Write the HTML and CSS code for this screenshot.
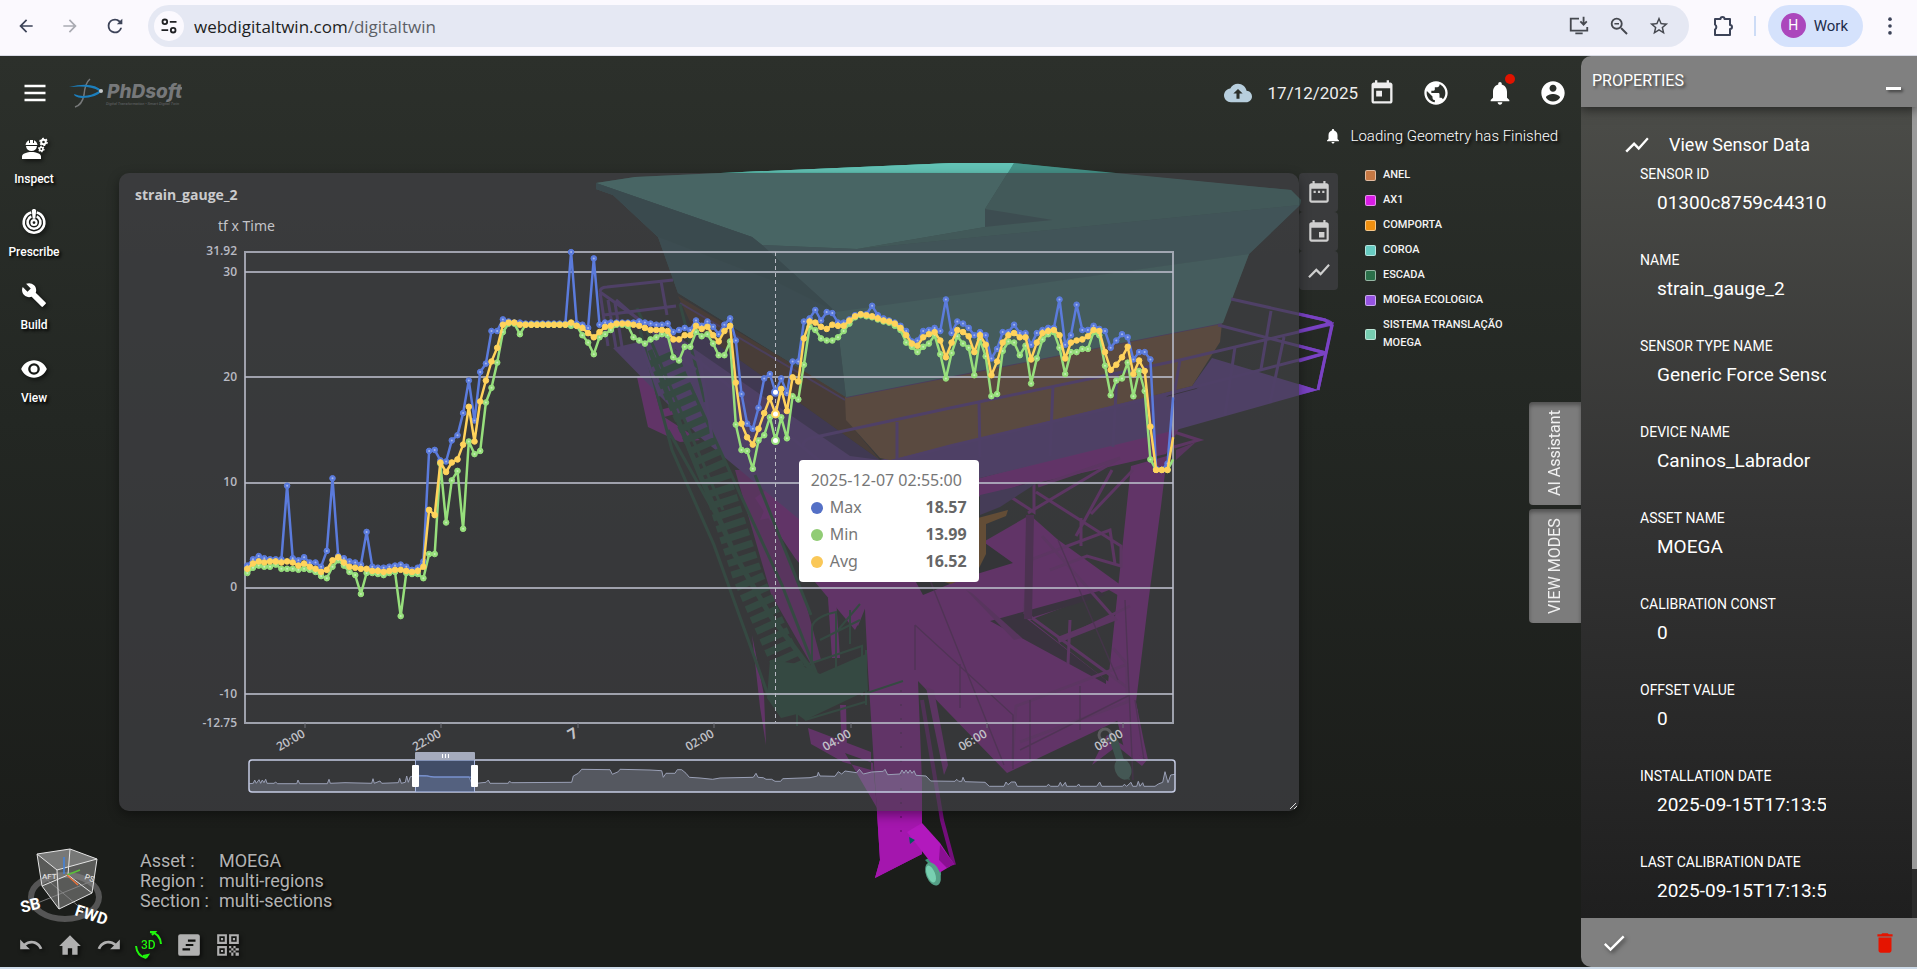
FILE: index.html
```html
<!DOCTYPE html>
<html lang="en">
<head>
<meta charset="utf-8">
<title>Web Digital Twin</title>
<link rel="stylesheet" href="styles.css">
</head>
<body>
<svg class="sprite" aria-hidden="true">
  <symbol id="i-back" viewBox="0 0 24 24"><path d="M20 11H7.83l5.59-5.59L12 4l-8 8 8 8 1.41-1.41L7.83 13H20z"/></symbol>
  <symbol id="i-fwd" viewBox="0 0 24 24"><path d="M12 4l-1.41 1.41L16.17 11H4v2h12.17l-5.58 5.59L12 20l8-8z"/></symbol>
  <symbol id="i-reload" viewBox="0 0 24 24"><path d="M17.65 6.35A7.96 7.96 0 0 0 12 4a8 8 0 1 0 7.73 10h-2.08A6 6 0 1 1 12 6c1.66 0 3.14.69 4.22 1.78L14 10h6V4z"/></symbol>
  <symbol id="i-site" viewBox="0 0 24 24"><g fill="none" stroke="currentColor" stroke-width="2.2"><circle cx="7" cy="7" r="2.8"/><path d="M13 7h8M3 17h8"/><circle cx="17" cy="17" r="2.8"/></g></symbol>
  <symbol id="i-install" viewBox="0 0 24 24"><path d="M12 4H3v13h18v-4M8 20h8M17 2v8M13.500 7l3.500 3.500L20.500 7" fill="none" stroke="currentColor" stroke-width="2"/></symbol>
  <symbol id="i-zoomout" viewBox="0 0 24 24"><path d="M15.500 14h-.79l-.28-.27A6.470 6.470 0 0 0 16 9.500 6.500 6.500 0 1 0 9.500 16c1.610 0 3.090-.59 4.230-1.570l.27.28v.79l6 6L21.500 20zM9.500 14C7.010 14 5 11.990 5 9.500S7.010 5 9.500 5 14 7.010 14 9.500 11.990 14 9.500 14zM7 8.700h5v1.600H7z"/></symbol>
  <symbol id="i-star" viewBox="0 0 24 24"><path d="M22 9.24l-7.19-.62L12 2 9.19 8.63 2 9.24l5.46 4.73L5.82 21 12 17.27 18.18 21l-1.63-7.03zM12 15.4l-3.76 2.27 1-4.28-3.32-2.88 4.38-.38L12 6.1l1.71 4.04 4.38.38-3.32 2.88 1 4.28z"/></symbol>
  <symbol id="i-ext" viewBox="0 0 24 24"><path d="M4 5h5.500a2 2 0 0 1 4 0H19v6a2 2 0 0 1 0 4v6H4v-5.500a3 3 0 0 0 0-5z" fill="none" stroke="currentColor" stroke-width="2" stroke-linejoin="round"/></symbol>
  <symbol id="i-kebab" viewBox="0 0 24 24"><circle cx="12" cy="4.500" r="2"/><circle cx="12" cy="12" r="2"/><circle cx="12" cy="19.500" r="2"/></symbol>
  <symbol id="i-menu" viewBox="0 0 24 24"><path d="M3 19h18v-2H3zM3 13h18v-2H3zM3 5v2h18V5z"/></symbol>
  <symbol id="i-engineer" viewBox="0 0 28 24"><path d="M2 21v-2.500C2 15.500 7 14 11.500 14s9.500 1.500 9.500 4.500V21zM6 8h11c-.3 3.200-2.500 5-5.500 5S6.300 11.200 6 8zM5.500 7c.3-2.400 1.800-4 3.500-4.800V5h1V2h3v3h1V2.200c1.700.8 3.200 2.400 3.500 4.800z"/><g fill="none" stroke="currentColor"><circle cx="23.500" cy="4" r="2.300" stroke-width="2"/><circle cx="23.500" cy="4" r="3.600" stroke-width="1.400" stroke-dasharray="1.900 1.870"/><circle cx="21.300" cy="11" r="1.700" stroke-width="1.600"/><circle cx="21.300" cy="11" r="2.700" stroke-width="1.200" stroke-dasharray="1.400 1.430"/></g></symbol>
  <symbol id="i-target" viewBox="0 0 24 24"><g fill="none" stroke="currentColor" stroke-width="2.400"><path d="M14.500 3.200a9.500 9.500 0 1 1-5 0M14.500 6.800a6 6 0 1 1-5 0"/><circle cx="12" cy="12.500" r="2.300" stroke-width="2"/></g><path d="M10 1.500c0-2 4-2 4 0L13.200 9h-2.400z"/></symbol>
  <symbol id="i-build" viewBox="0 0 24 24"><path d="M22.7 19l-9.1-9.1c.9-2.3.4-5-1.5-6.9-2-2-5-2.4-7.4-1.3L9 6 6 9 1.6 4.700C.4 7.100.9 10.100 2.900 12.100c1.900 1.900 4.600 2.400 6.900 1.500l9.100 9.100c.4.4 1 .4 1.400 0l2.300-2.300c.5-.4.5-1.100.1-1.400z"/></symbol>
  <symbol id="i-eye" viewBox="0 0 24 24"><path d="M12 4.500C7 4.500 2.730 7.610 1 12c1.730 4.390 6 7.500 11 7.500s9.270-3.110 11-7.500c-1.730-4.390-6-7.500-11-7.500zM12 17a5 5 0 1 1 0-10 5 5 0 0 1 0 10zm0-8a3 3 0 1 0 0 6 3 3 0 0 0 0-6z"/></symbol>
  <symbol id="i-cloud" viewBox="0 0 24 24"><path fill-rule="evenodd" d="M19.350 10.040C18.670 6.590 15.640 4 12 4 9.110 4 6.600 5.640 5.350 8.040 2.340 8.360 0 10.910 0 14c0 3.310 2.690 6 6 6h13c2.760 0 5-2.240 5-5 0-2.640-2.050-4.780-4.650-4.960zM13.300 12.500V17h-2.600v-4.500H8L12 8.500l4 4z"/></symbol>
  <symbol id="i-today" viewBox="0 0 24 24"><path d="M19 3h-1V1h-2v2H8V1H6v2H5c-1.110 0-1.990.9-1.990 2L3 19c0 1.100.89 2 2 2h14c1.100 0 2-.9 2-2V5c0-1.100-.9-2-2-2zm0 16H5V8h14zM7 10h5v5H7z"/></symbol>
  <symbol id="i-event" viewBox="0 0 24 24"><path d="M19 3h-1V1h-2v2H8V1H6v2H5c-1.110 0-1.990.9-1.990 2L3 19c0 1.100.89 2 2 2h14c1.100 0 2-.9 2-2V5c0-1.100-.9-2-2-2zm0 16H5V8h14zM12 12h5v5h-5z"/></symbol>
  <symbol id="i-range" viewBox="0 0 24 24"><path d="M19 3h-1V1h-2v2H8V1H6v2H5c-1.110 0-1.990.9-1.990 2L3 19c0 1.100.89 2 2 2h14c1.100 0 2-.9 2-2V5c0-1.100-.9-2-2-2zm0 16H5V8h14zM7 10h2v2H7zM11 10h2v2h-2zM15 10h2v2h-2z"/></symbol>
  <symbol id="i-globe" viewBox="0 0 24 24"><path d="M12 2C6.480 2 2 6.480 2 12s4.480 10 10 10 10-4.480 10-10S17.520 2 12 2zm-1 17.930c-3.950-.49-7-3.850-7-7.930 0-.62.08-1.210.21-1.790L9 15v1c0 1.100.9 2 2 2zm6.900-2.540c-.26-.81-1-1.390-1.900-1.390h-1v-3c0-.55-.45-1-1-1H8v-2h2c.55 0 1-.45 1-1V7h2c1.100 0 2-.9 2-2v-.41c2.930 1.190 5 4.060 5 7.410 0 2.080-.8 3.970-2.100 5.390z"/></symbol>
  <symbol id="i-bell" viewBox="0 0 24 24"><path d="M12 22c1.100 0 2-.9 2-2h-4c0 1.100.89 2 2 2zm6-6v-5c0-3.070-1.640-5.640-4.500-6.320V4c0-.83-.67-1.500-1.500-1.500s-1.500.67-1.500 1.500v.68C7.630 5.360 6 7.920 6 11v5l-2 2v1h16v-1z"/></symbol>
  <symbol id="i-user" viewBox="0 0 24 24"><path d="M12 2C6.480 2 2 6.480 2 12s4.480 10 10 10 10-4.480 10-10S17.520 2 12 2zm0 3c1.660 0 3 1.340 3 3s-1.340 3-3 3-3-1.340-3-3 1.340-3 3-3zm0 14.200c-2.500 0-4.710-1.280-6-3.220.03-1.990 4-3.080 6-3.080 1.990 0 5.970 1.090 6 3.080-1.290 1.940-3.500 3.220-6 3.220z"/></symbol>
  <symbol id="i-chart" viewBox="0 0 24 24"><path d="M3.500 18.490l6-6.010 4 4L22 6.920l-1.410-1.410-7.090 7.970-4-4L2 16.990z"/></symbol>
  <symbol id="i-check" viewBox="0 0 24 24"><path d="M9 16.170L4.830 12l-1.420 1.410L9 19 21 7l-1.410-1.410z"/></symbol>
  <symbol id="i-trash" viewBox="0 0 24 24"><path d="M6 19c0 1.100.9 2 2 2h8c1.100 0 2-.9 2-2V7H6zM19 4h-3.500l-1-1h-5l-1 1H5v2h14z"/></symbol>
  <symbol id="i-undo" viewBox="0 0 24 24"><path d="M12.500 8c-2.650 0-5.050.99-6.900 2.600L2 7v9h9l-3.620-3.620c1.390-1.160 3.160-1.880 5.120-1.880 3.540 0 6.550 2.310 7.600 5.500l2.370-.78C21.080 11.030 17.150 8 12.500 8z"/></symbol>
  <symbol id="i-redo" viewBox="0 0 24 24"><path d="M11.500 8c2.650 0 5.050.99 6.900 2.600L22 7v9h-9l3.620-3.620c-1.390-1.160-3.160-1.880-5.120-1.880-3.540 0-6.550 2.310-7.600 5.500l-2.370-.78C2.920 11.030 6.850 8 11.500 8z"/></symbol>
  <symbol id="i-home" viewBox="0 0 24 24"><path d="M10 21v-6h4v6h5v-8h3L12 3 2 13h3v8z"/></symbol>
  <symbol id="i-notes" viewBox="0 0 24 24"><path fill-rule="evenodd" d="M4 2h16a2 2 0 0 1 2 2v16a2 2 0 0 1-2 2H4a2 2 0 0 1-2-2V4a2 2 0 0 1 2-2zm7 5v2h7V7zm-2 4v2h7v-2zm-3 4v2h7v-2z"/></symbol>
  <symbol id="i-qr" viewBox="0 0 24 24"><g fill="none" stroke="currentColor" stroke-width="2"><path d="M3 3h7v7H3zM14 3h7v7h-7zM3 14h7v7H3z"/></g><path d="M13 13h2v2h-2zM15 15h2v2h-2zM17 13h2v2h-2zM19 15h3v2h-3zM13 17h2v2h-2zM17 17h2v2h-2zM15 19h2v3h-2zM19 19h3v3h-3zM5.500 5.500h2v2h-2zM16.500 5.500h2v2h-2zM5.500 16.500h2v2h-2z"/></symbol>
</svg>

<header class="browser">
  <nav class="browser-nav" aria-label="Browser">
    <button aria-label="Back"><svg class="ic ic-20"><use href="#i-back"/></svg></button>
    <button aria-label="Forward" class="dim"><svg class="ic ic-20"><use href="#i-fwd"/></svg></button>
    <button aria-label="Reload"><svg class="ic ic-22"><use href="#i-reload"/></svg></button>
  </nav>
  <div class="address">
    <button class="site" aria-label="Site information"><svg class="ic ic-20"><use href="#i-site"/></svg></button>
    <p class="url"><span>webdigitaltwin.com</span>/digitaltwin</p>
    <button aria-label="Install"><svg class="ic ic-22"><use href="#i-install"/></svg></button>
    <button aria-label="Zoom"><svg class="ic ic-22"><use href="#i-zoomout"/></svg></button>
    <button aria-label="Bookmark"><svg class="ic ic-22"><use href="#i-star"/></svg></button>
  </div>
  <button class="ext" aria-label="Extensions"><svg class="ic ic-24"><use href="#i-ext"/></svg></button>
  <span class="divider"></span>
  <button class="profile"><span class="avatar">H</span>Work</button>
  <button aria-label="Menu"><svg class="ic ic-22"><use href="#i-kebab"/></svg></button>
</header>

<main class="app">
  <svg class="scene" viewBox="0 56 1917 911" role="img" aria-label="3D model">
    <!-- left support and lower beams -->
    <g fill="#ab17b5">
      <path d="M637 377l13-3 10 36 66-18v8l-62 17 36 23-20 2-32-15z"/>
      <path d="M755 440l30 18 35 100-10 8-50-70zM735 470l20 0 50 130 16 60-10 4-40-70z" opacity=".8"/>
      <path d="M752 635l12 60 2 50-6-38zM808 728l63 24 0 18-28-8-32-18zM840 705h6l1 45-5 0zM845 753l32 55-4-45z"/>
      <path d="M828 598h8l4 60h-8z"/>
      <path d="M780 480l42 0 20 70 18 70-5 10-60-72-40-60z"/>
      <path d="M760 520L980 478l200-52-14 28-186 42-110 100-12 30-32-40-60-80z"/>
      <path d="M1131 466l36-10-6 50-13 98-12 98 8 40 4 18-24-12-16-65z"/>
      <path d="M860 560h90l35-19 45-26 27 24 90 65v8l-38-22-79 30 76 60 26 16 6 15-131 62-89-92 4 100v73l-47 24 5-18-12-190-3-60z"/>
      <path d="M1092 765l15-30 40 25-5 6-25-20z"/>
    </g>
    <path d="M985 543l28 20-46 14-44 18-12-22z" fill="#16181a"/>
    <path d="M990 621l109-30 6 4-78 24 79 61v4z" fill="#2a1330"/>
    <path d="M926 687l8 3 14 75-4 10z" fill="#9a1aa4"/>
    <path d="M966 590l6 3 50 45-8 2z" fill="#8d1a96"/>
    <path d="M877 811h45v43l-47 24 5-18z" fill="#a416ae"/>
    <g fill="none" stroke="#9a1ba4" stroke-width="3">
      <path d="M1028 513l92-55-82 28M1036 492l85 54v20l-34-10-37 14M1000 490l34 22v-30M1112 470l-36 66M1081 518v28M1024 612l104 76M1030 556l-6 55M1060 640l70-34M1174 432l25 8-25 7M1133 470l-42 44M1042 536l75 85M1030 560l80-30 5 34"/>
      <path d="M1070 620l-2 44M1113 648l14 16v38l-107 40M1128 664l-112 42-4 60"/>
      <path d="M1058 640l56-22" stroke-width="6"/>
    </g>
    <path d="M1176 450l20-8-20 18z" fill="#8d1a96"/>
    <g fill="none" stroke="#5c1164" stroke-width="1.500" opacity=".7">
      <path d="M930 580l74 185M915 625l98 90v54M915 625v45M960 664v44M1020 750l110-55M1058 540l60 140M1080 686v44M1030 700v60"/>
      <path d="M1125 600l8 180M1135 700l9 60"/>
      <path d="M901 690v150" stroke-dasharray="2 12"/>
    </g>
    <path d="M922 700l20 120 12 45" stroke="#740e7c" stroke-width="4" fill="none"/>
    <path d="M980 500l48-18-28 23-20 8zM1026 515h8l-2 104h-8z" fill="#64106c"/>
    <path d="M925 860l12-6 4 8 0 14z" fill="#3f9478"/>
    <path d="M907 832l15-9 18 20 14 21-15 9z" fill="#b219bd"/>
    <path d="M940 845l14 19-7 4-8-8z" fill="#8a0f92"/>
    <path d="M909 837l6 3-5 4z" fill="#055a5c"/>
    <ellipse cx="933" cy="874" rx="7" ry="12" transform="rotate(-22 933 874)" fill="#559f86"/>
    <ellipse cx="931" cy="874" rx="4" ry="9" transform="rotate(-22 931 874)" fill="#78d0b1"/>
    <path d="M1108 735l10 5 12 40-8-2z" fill="#357a62"/>
    <ellipse cx="1123" cy="769" rx="8" ry="11" transform="rotate(-22 1123 769)" fill="#4c8b75"/>
    <circle cx="1105" cy="735" r="6" fill="none" stroke="#9a9a9a" stroke-width="3"/>
    <!-- gate -->
    <path d="M978 518l30-8-2 6-20 8v30l-8 16zM935 579l16 5 14-6z" fill="#b26a12"/>
    <!-- platform -->
    <path d="M613 348l60-14 207 126 312-74 20-28 106 32-142 40-196 48-120 42-60 0-100-83z" fill="#6d3fad"/>
    <path d="M692 326l188 134-30-4-160-110z" fill="#3f276e"/>
    <path d="M1172 392l30-7-6 4-30 8z" fill="#25182e"/>
    <path d="M980 495l60-14-40 26-20 8z" fill="#4e2f80"/>
    <!-- skirt -->
    <path d="M678 296l168 100 2 26 32 38-188-134z" fill="#583519"/>
    <path d="M845 397l377-74-2 19-28 44-302 74-10-2-34-38z" fill="#955f32"/>
    <path d="M680 303l165 97M846 397l376-74" stroke="#5f3a92" stroke-width="2" fill="none"/>
    <!-- hopper -->
    <path d="M596 183l39-6 107-5 210-9h62l94 10 183 17 10 10-1 5-51 49-26 67-377 76-168-104-20-56-45-42-17-6z" fill="#317068"/>
    <path d="M596 183l39-6 107-5 210-9h62l-29 46v18l-128 22-95-4-10-8z" fill="#59baaa"/>
    <path d="M742 172l210-9h62l-5 10z" fill="#63c3b6"/>
    <path d="M1014 163l277 27 10 10-1 5-443 44 128-22v-18z" fill="#459187"/>
    <path d="M985 209l68 11-68 7z" fill="#356a6b"/>
    <path d="M762 245l95 4 443-44-51 49-413 59z" fill="#428183"/>
    <path d="M836 312l413-58-26 69-377 74z" fill="#4f9c93"/>
    <path d="M596 183l156 54 10 8 74 67 10 85-168-104-20-56-45-42-17-6z" fill="#31676b"/>
    <path d="M596 183l156 54 10 8 74 67-60-30-118-45-45-42-17-6z" fill="#2b5f63"/>
    <!-- stairs -->
    <g fill="none" stroke="#1a5d39">
      <path d="M662 355l52 118 34 104 42 94" stroke-width="30" stroke-dasharray="7 5"/>
      <path d="M680 304l25 98M637 308l86 202M640 330l32 120 42 95 54 150M668 430l54 96M690 385l92 200 35 90M755 475l56 140" stroke-width="3"/>
      <path d="M650 350l50 125 35 80 35 60 45 60" stroke-width="5"/>
      <path d="M812 680v-52q0-8 16-14l8-2v60M820 640l40-20M838 630l22-26M850 610v34M797 668l65-22v50M797 668v58M805 720l60-18M867 693l36-12M866 650v55" stroke-width="2"/>
    </g>
    <path d="M770 660l28 4 22 10 46-20 2 36-63 30-8-6-16 4-14-20z" fill="#1a5d39"/>
    <!-- railings -->
    <g fill="none" stroke="#6f3fb4" stroke-width="3">
      <path d="M600 292q0-5 7-5l66-7M604 315l72-9M661 281l6 34M600 292l8 54M608 300l8 48M615 303l8 50M600 292l100 70 145 120M616 300l80 70M640 340l20 56M700 358l12 80"/>
      <path d="M803 446q0-6 8-8l139-30 230-48 152-36-14 66M890 462l60-16 210-50 166-43M1231 299l94 21q8 2 7 6M1218 325l108 28M897 422v38M979 403l1 54M1053 386l-3 70M1117 373l-4 74M1180 360l-6 34M1235 347l-10 68M1271 311l-10 58M1284 337l-14 66"/>
    </g>
    <path d="M1299 384l19 6-19 5z" fill="#7a42c4"/>
    <path d="M1299 314l26 6 7 6-14 64M1299 331l33-8M1299 361l27-8M1299 346l27 7" stroke="#7a42c4" stroke-width="3" fill="none"/>
  </svg>

  <section class="workspace">
    <header class="topbar">
      <button aria-label="Main menu"><svg class="ic ic-28"><use href="#i-menu"/></svg></button>
      <svg class="logo" viewBox="70 76 114 32" role="img" aria-label="PhDsoft">
        <path d="M92 78q-5 4-6 16-2 10-9 12" fill="none" stroke="#77797a" stroke-width="1.500"/>
        <path d="M71 86q24-6 33 4-6 7-20 7-8-1-8-4 12 5 25-3-8-6-30-4z" fill="#1c7fbd"/>
        <circle cx="103" cy="90" r="2" fill="#c7c9ca"/>
        <text x="109" y="97" class="logo-name">PhDsoft</text>
        <text x="108" y="104" class="logo-tag">Digital Transformation - Smart Digital Twin</text>
      </svg>
      <div class="top-actions">
        <button aria-label="Upload" class="cloud"><svg class="ic ic-28"><use href="#i-cloud"/></svg></button>
        <button class="date">17/12/2025<svg class="ic ic-28"><use href="#i-today"/></svg></button>
        <button aria-label="Language" class="globe"><svg class="ic ic-28"><use href="#i-globe"/></svg></button>
        <button aria-label="Notifications" class="alerts"><svg class="ic ic-28"><use href="#i-bell"/></svg><span class="dot"></span></button>
        <button aria-label="Account"><svg class="ic ic-28"><use href="#i-user"/></svg></button>
      </div>
    </header>

    <div class="content">
      <nav class="side" aria-label="Modes">
        <button><svg class="ic ic-28"><use href="#i-engineer"/></svg>Inspect</button>
        <button><svg class="ic ic-26"><use href="#i-target"/></svg>Prescribe</button>
        <button><svg class="ic ic-26"><use href="#i-build"/></svg>Build</button>
        <button><svg class="ic ic-28"><use href="#i-eye"/></svg>View</button>
      </nav>

      <article class="panel">
        <h2>strain_gauge_2</h2>
        <svg class="chart" viewBox="119 205 1180 606" role="img" aria-label="tf x Time">
          <defs><clipPath id="plot"><rect x="243" y="248" width="932" height="480"/></clipPath></defs>
          <text x="218" y="231" class="axis-name">tf x Time</text>
          <g class="ylab">
            <text x="237" y="255">31.92</text><text x="237" y="276">30</text><text x="237" y="381">20</text>
            <text x="237" y="486">10</text><text x="237" y="591">0</text><text x="237" y="698">-10</text><text x="237" y="727">-12.75</text>
          </g>
          <path class="grid" d="M245 272h928M245 377h928M245 483h928M245 588h928M245 694h928"/>
          <rect class="frame" x="245" y="252" width="928" height="471"/>
          <g id="ticks"></g>
          <path class="pointer" d="M775.500 252v470"/>
          <g id="series" clip-path="url(#plot)"></g>
          <g id="overview"></g>
          <g>
            <rect class="ov-frame" x="249" y="760" width="926" height="32" rx="3"/>
            <rect class="ov-sel" x="415" y="760" width="59" height="32"/>
            <path class="ov-line" d="M416 776l12 0 6 1 36 0 4 1"/>
            <rect class="ov-grip" x="415" y="752" width="60" height="8" rx="1"/>
            <path class="ov-dots" d="M442.500 754v4M445.500 754v4M448.500 754v4"/>
            <path class="ov-edge" d="M415.500 760v32M474.500 760v32"/>
            <rect class="ov-handle" x="412" y="765" width="7" height="22" rx="1"/>
            <rect class="ov-handle" x="471" y="765" width="7" height="22" rx="1"/>
          </g>
          <path class="resize" d="M1290 809l6-6M1294 809l3-3"/>
        </svg>
        <div class="tooltip">
          <p>2025-12-07 02:55:00</p>
          <dl>
            <dt><i class="c-max"></i>Max</dt><dd>18.57</dd>
            <dt><i class="c-min"></i>Min</dt><dd>13.99</dd>
            <dt><i class="c-avg"></i>Avg</dt><dd>16.52</dd>
          </dl>
        </div>
      </article>

      <div class="tools">
        <button aria-label="Date range"><svg class="ic ic-26"><use href="#i-range"/></svg></button>
        <button aria-label="Single date"><svg class="ic ic-26"><use href="#i-event"/></svg></button>
        <button aria-label="Series"><svg class="ic ic-26"><use href="#i-chart"/></svg></button>
      </div>

      <aside class="rail">
        <p class="notice"><svg class="ic ic-18"><use href="#i-bell"/></svg>Loading Geometry has Finished</p>
        <ul class="legend">
          <li><i class="k1"></i>ANEL</li>
          <li><i class="k2"></i>AX1</li>
          <li><i class="k3"></i>COMPORTA</li>
          <li><i class="k4"></i>COROA</li>
          <li><i class="k5"></i>ESCADA</li>
          <li><i class="k6"></i>MOEGA ECOLOGICA</li>
          <li><i class="k7"></i>SISTEMA TRANSLAÇÃO MOEGA</li>
        </ul>
        <div class="tabs">
          <button>AI Assistant</button>
          <button>VIEW MODES</button>
        </div>
      </aside>
    </div>

    <div class="status">
      <svg class="cube" viewBox="16 845 96 82" role="img" aria-label="Orientation cube">
        <ellipse cx="65" cy="897" rx="34" ry="22" fill="none" stroke="#555" stroke-width="6"/>
        <path d="M35 904l57-23M45 878l38 32" stroke="#777" stroke-width="1"/>
        <path d="M37 854l33-5 27 10-5 34-33 16-17-23z" fill="#8c8c8c" fill-opacity=".55"/>
        <path d="M37 854l33-5 27 10-40 11z" fill="#8c8c8c" fill-opacity=".6"/>
        <path d="M37 854l33-5 27 10-40 11zM37 854l5 32 17 23 33-16 5-34M57 870l2 39M70 849l-2 26-26 11M68 875l24 18" fill="none" stroke="#e4e4e4" stroke-width="1"/>
        <path d="M64 857v17" stroke="#3f83e0" stroke-width="1.500"/><path d="M67 875l13-5" stroke="#5bc13a" stroke-width="1.500"/><path d="M67 875l11 10" stroke="#e8703a" stroke-width="1.500"/>
        <text class="c-small" x="42" y="879">AFT</text><text class="c-small" x="84" y="879" transform="rotate(20 84 879)">PS</text>
        <text class="c-big" x="22" y="913" transform="rotate(-14 22 913)">SB</text><text class="c-big" x="74" y="915" transform="rotate(18 74 915)">FWD</text>
      </svg>
      <dl class="info">
        <dt>Asset :</dt><dd>MOEGA</dd>
        <dt>Region :</dt><dd>multi-regions</dd>
        <dt>Section :</dt><dd>multi-sections</dd>
      </dl>
    </div>
    <div class="toolbar">
      <button aria-label="Undo"><svg class="ic ic-26"><use href="#i-undo"/></svg></button>
      <button aria-label="Home"><svg class="ic ic-26"><use href="#i-home"/></svg></button>
      <button aria-label="Redo"><svg class="ic ic-26"><use href="#i-redo"/></svg></button>
      <button aria-label="3D view" class="three"><svg class="ic ic-28" viewBox="0 0 28 28"><path d="M15 1q10 1 11 12M15 1l5 0-3 3M1 15q1 10 10 12M11 27l2-3-5 1" fill="none" stroke="currentColor" stroke-width="2"/><text x="6" y="18">3D</text></svg></button>
      <button aria-label="Notes"><svg class="ic ic-26"><use href="#i-notes"/></svg></button>
      <button aria-label="QR code"><svg class="ic ic-26"><use href="#i-qr"/></svg></button>
    </div>
  </section>

  <aside class="props">
    <header><h1>PROPERTIES</h1><button aria-label="Minimize" class="min"></button></header>
    <div class="props-body">
      <form>
        <button type="button" class="view-data"><svg class="ic ic-28"><use href="#i-chart"/></svg>View Sensor Data</button>
        <div class="field"><label for="f1">SENSOR ID</label><input id="f1" value="01300c8759c44310"></div>
        <div class="field"><label for="f2">NAME</label><input id="f2" value="strain_gauge_2"></div>
        <div class="field"><label for="f3">SENSOR TYPE NAME</label><input id="f3" value="Generic Force Sensor"></div>
        <div class="field"><label for="f4">DEVICE NAME</label><input id="f4" value="Caninos_Labrador"></div>
        <div class="field"><label for="f5">ASSET NAME</label><input id="f5" value="MOEGA"></div>
        <div class="field"><label for="f6">CALIBRATION CONST</label><input id="f6" value="0"></div>
        <div class="field"><label for="f7">OFFSET VALUE</label><input id="f7" value="0"></div>
        <div class="field"><label for="f8">INSTALLATION DATE</label><input id="f8" value="2025-09-15T17:13:5"></div>
        <div class="field"><label for="f9">LAST CALIBRATION DATE</label><input id="f9" value="2025-09-15T17:13:5"></div>
      </form>
      <span class="track"><span class="thumb"></span></span>
    </div>
    <footer>
      <button aria-label="Confirm"><svg class="ic ic-28"><use href="#i-check"/></svg></button>
      <button aria-label="Delete" class="delete"><svg class="ic ic-26"><use href="#i-trash"/></svg></button>
    </footer>
  </aside>
</main>
<div class="strip"></div>
<script src="chart.js"></script>
</body>
</html>
```
FILE: styles.css
```css
* { box-sizing: border-box; }
html, body { height: 100%; }
body {
  margin: 0;
  display: flex;
  flex-direction: column;
  overflow: hidden;
  font-family: Roboto, "Liberation Sans", sans-serif;
  color: #fff;
  background: #1b1d1a;
}
button {
  padding: 0;
  border: 0;
  background: none;
  color: inherit;
  font: inherit;
  display: flex;
  align-items: center;
  flex: none;
}
h1, h2, p, dl, dd, ul { margin: 0; padding: 0; }
.sprite { position: absolute; width: 0; height: 0; }
.ic { display: block; fill: currentColor; flex: none; }
.ic-18 { width: 18px; height: 18px; }
.ic-20 { width: 20px; height: 20px; }
.ic-22 { width: 22px; height: 22px; }
.ic-24 { width: 24px; height: 24px; }
.ic-26 { width: 26px; height: 26px; }
.ic-28 { width: 28px; height: 28px; }

/* browser chrome */
.browser {
  flex: none;
  height: 56px;
  display: flex;
  align-items: center;
  padding: 0 16px 4px 16px;
  background: #fbf9fe;
  border-bottom: 1px solid #dadce6;
  color: #3c4358;
}
.browser-nav { display: flex; gap: 24px; width: 132px; }
.dim { color: #a9abb2; }
.address {
  flex: 1;
  height: 42px;
  display: flex;
  align-items: center;
  gap: 18px;
  padding: 0 19px 0 6px;
  border-radius: 21px;
  background: #e5e8f3;
  color: #45484f;
}
.site { width: 30px; height: 30px; border-radius: 50%; background: #fbf9fe; justify-content: center; margin-right: -8px; color: #202124; }
.url { flex: 1; padding-top: 2px; font: 17px/24px "Open Sans", "Noto Sans", sans-serif; color: #5c5f66; }
.url span { color: #1d1e22; }
.ext { margin-left: 22px; }
.divider { width: 2px; height: 20px; margin: 0 12px 0 19px; background: #cddcf6; }
.profile { height: 42px; padding: 0 15px 0 13px; margin-right: 16px; gap: 8px; border-radius: 21px; background: #d5e2fc; font-size: 15px; line-height: 20px; color: #1c2b4a; }
.avatar { width: 25px; height: 25px; border-radius: 50%; background: #ab47bc; color: #fff; font-size: 14px; line-height: 25px; text-align: center; }

/* application */
.app {
  position: relative;
  flex: 1;
  min-height: 0;
  display: flex;
  background: linear-gradient(#2c302b, #232723 40%, #1b1d1a 85%);
}
.scene { position: absolute; left: 0; top: 0; width: 100%; height: 100%; }
.workspace { position: relative; flex: 1; min-width: 0; display: flex; flex-direction: column; }
.topbar { height: 60px; padding: 13px 14px 0 21px; display: flex; align-items: center; }
.logo { width: 114px; height: 32px; margin-left: 19px; }
.logo-name { font: italic 800 19px Inter, sans-serif; fill: #76787a; }
.logo-tag { font: italic 4px Roboto, sans-serif; fill: #66686a; }
.top-actions { margin-left: auto; display: flex; align-items: center; }
.cloud { color: #b7cedd; margin-right: 16px; }
.date { gap: 10px; font-size: 17px; line-height: 20px; color: #eee; margin-right: 26px; }
.globe { margin-right: 36px; }
.alerts { position: relative; margin-right: 25px; }
.dot { position: absolute; top: -5px; right: -1px; width: 10px; height: 10px; border-radius: 50%; background: #e01300; }

.content { display: grid; grid-template-columns: 119px 1fr 39px 243px; grid-template-rows: 57px auto; }
.side { grid-row: 1 / 3; width: 68px; padding-top: 20px; display: flex; flex-direction: column; gap: 22px; }
.side button { flex-direction: column; height: 51px; justify-content: space-between; font-size: 12px; line-height: 16px; font-weight: 500; text-shadow: 2px 2px 3px #000; }
.side .ic, .toolbar .ic { filter: drop-shadow(2px 2px 2px rgba(0, 0, 0, .6)); }

.panel {
  position: relative;
  grid-column: 2;
  grid-row: 2;
  padding-top: 12px;
  border-radius: 10px;
  background: rgba(66, 66, 70, .7);
  box-shadow: 0 4px 12px rgba(0, 0, 0, .4);
  font-family: "Noto Sans", "Open Sans", sans-serif;
}
.panel h2 { margin-left: 16px; font: 700 14px/20px "Open Sans", sans-serif; color: #cbcbcd; }
.chart { display: block; width: 100%; }
.axis-name { font-size: 14px; fill: #c3c3c8; }
.ylab text { font: 600 12px "Open Sans", sans-serif; fill: #b9bbc4; text-anchor: end; }
.grid, .frame { fill: none; stroke: #b9bcc9; stroke-opacity: .8; stroke-width: 2; }
.tick { stroke: #6e7079; stroke-width: 1; }
.xlab { font: 600 12px "Open Sans", sans-serif; fill: #c1c2c8; text-anchor: end; }
.xlab.day { font-size: 15px; font-weight: 700; }
.pointer { stroke: #b9bbc4; stroke-width: 1; stroke-dasharray: 4 3; }
.line { fill: none; stroke-width: 2.5; stroke-linejoin: round; }
.area { fill: rgba(160, 165, 190, .3); }
.area-edge { fill: none; stroke: #9aa0b6; stroke-width: 1; }
.ov-frame { fill: none; stroke: #c5cbe3; stroke-width: 1.5; }
.ov-sel { fill: rgba(84, 112, 180, .38); }
.ov-line { fill: none; stroke: #7593dc; }
.ov-grip { fill: #a5abbd; }
.ov-dots { stroke: #fff; stroke-width: 1; }
.ov-edge { stroke: #aab8df; stroke-width: 1; }
.ov-handle { fill: #fff; }
.resize { stroke: #ddd; stroke-width: 1; }

.tooltip {
  position: absolute;
  left: 57.6%;
  top: 45%;
  width: 180px;
  padding: 7px 12px;
  border-radius: 4px;
  background: #fff;
  color: #777;
  font-size: 16px;
  line-height: 27px;
  white-space: nowrap;
}
.tooltip dl { display: grid; grid-template-columns: 1fr auto; }
.tooltip dt { display: flex; align-items: center; gap: 7px; }
.tooltip dt i { width: 12px; height: 12px; border-radius: 50%; }
.tooltip dd { font-weight: 700; color: #666; }
.c-max { background: #5470c6; }
.c-min { background: #91cc75; }
.c-avg { background: #fac858; }

.tools { grid-column: 3; grid-row: 2; display: flex; flex-direction: column; align-items: stretch; }
.tools button { height: 39px; justify-content: center; border-radius: 4px; background: rgba(66, 66, 70, .7); color: #cfcfcf; }

.rail { grid-column: 4; grid-row: 1 / 3; padding-top: 10px; display: flex; flex-direction: column; }
.notice { display: flex; align-items: center; justify-content: flex-end; gap: 9px; padding-right: 23px; font-size: 15px; line-height: 20px; font-weight: 300; white-space: nowrap; text-shadow: 2px 2px 3px #000; color: #fff; }
.legend { list-style: none; width: 160px; margin: 20px 0 0 27px; display: flex; flex-direction: column; gap: 7px; font-size: 11px; line-height: 18px; font-weight: 500; color: #f4f4f4; }
.legend li { display: flex; align-items: center; gap: 7px; }
.legend i { flex: none; width: 11px; height: 11px; border: 1px solid rgba(255, 255, 255, .5); border-radius: 2px; }
.k1 { background: #c67843; }
.k2 { background: #d91de6; }
.k3 { background: #ef9010; }
.k4 { background: #67cbc1; }
.k5 { background: #2b704a; }
.k6 { background: #9653e2; }
.k7 { background: #76cdb0; }
.tabs { margin-top: 50px; align-self: flex-end; display: flex; flex-direction: column; gap: 4px; }
.tabs button { width: 52px; height: 103px; justify-content: center; writing-mode: vertical-rl; transform: rotate(180deg); border-radius: 0 4px 4px 0; background: #7c7c7c; box-shadow: inset 0 -3px 4px rgba(0, 0, 0, .35); font-size: 16px; line-height: 20px; color: #f1f1f1; }
.tabs button + button { height: 114px; }

.status { display: flex; padding: 34px 0 0 16px; gap: 28px; }
.cube { width: 96px; height: 82px; overflow: visible; }
.c-small { font: 500 8px Roboto, sans-serif; fill: #ddd; }
.c-big { font: 700 16px Roboto, sans-serif; fill: #fff; }
.info { display: grid; grid-template-columns: 79px auto; grid-auto-rows: 20px; padding-top: 6px; font-size: 18px; line-height: 20px; color: #b2b2b2; text-shadow: 2px 2px 3px #000; }
.toolbar { display: flex; gap: 13px; padding: 4px 0 0 18px; height: 32px; align-items: center; color: #b0b0b0; }
.three { width: 28px; justify-content: center; color: #20f50d; }
.three text { font: 500 12px Roboto, sans-serif; }

/* properties */
.props { position: relative; width: 336px; flex: none; display: flex; flex-direction: column; border-radius: 10px 0 0 10px; overflow: hidden; }
.props header { position: relative; height: 51px; flex: none; display: flex; justify-content: space-between; padding: 15px 16px 0 11px; background: #808080; box-shadow: 0 3px 10px rgba(0, 0, 0, .5); }
.props h1 { font-size: 16px; line-height: 20px; font-weight: 400; text-shadow: 2px 2px 3px rgba(0, 0, 0, .5); }
.min { width: 15px; height: 3px; margin-top: 16px; background: #fff; box-shadow: 2px 2px 3px rgba(0, 0, 0, .5); }
.props-body { flex: 1; min-height: 0; display: flex; justify-content: space-between; background: linear-gradient(#4b4c48, #333 50%, #1f1f1f); }
.props form { padding: 24px 0 0 59px; overflow: hidden; }
.view-data { gap: 18px; height: 28px; margin-left: -17px; font-size: 18px; line-height: 28px; }
.field { display: flex; flex-direction: column; height: 86px; padding-top: 5px; }
.field label { font-size: 14px; line-height: 20px; height: 27px; }
.field input { width: 169px; height: 24px; margin-left: 17px; padding: 0; border: 0; background: none; outline: 0; color: #fff; font: 19px/24px Roboto, sans-serif; }
.track { width: 5px; background: #2b2b2b; }
.thumb { display: block; height: 94%; background: #9a9a9a; }
.props footer { height: 49px; flex: none; display: flex; align-items: center; justify-content: space-between; padding: 0 19px 0 19px; background: #808080; }
.props footer button:first-child .ic { filter: drop-shadow(2px 2px 2px rgba(0, 0, 0, .5)); }
.delete { color: #e51400; }
.strip { flex: none; height: 2px; background: #cddbe9; }
```
FILE: chart.js
```js
const max = [2.1,2.7,3,2.8,2.7,2.7,2.7,9.7,2.8,2.6,2.9,2.4,2.4,2,3.5,10.4,3,2.8,2.5,2.4,2.2,5.3,2,1.9,1.9,2,2.1,2.2,2,1.7,1.9,2.5,13,13.1,12.1,12,14,14.5,16.6,19.7,15.9,20.5,21.3,24.4,24.4,25.5,25.3,25.2,25.2,25.1,25.1,25.1,25.1,25.1,25.1,25.1,25.1,31.9,25.1,25,24.7,31.3,25,25.2,25.2,25.2,25.2,25.2,25.2,25.3,25.2,25.1,25,25,25.1,24.3,24.5,24.7,24.5,25.4,24.9,25.3,24.8,24.1,25,25.6,23.5,18.4,15.6,15.1,17.1,19.9,20.3,18.57,19.9,18.5,21.5,21.5,25.3,25.6,26.4,25.4,26.2,26.1,25.2,25.2,25.5,25.9,26,26,26.8,25.9,25.6,25.4,25.2,24.9,24.4,23.4,23.5,24.4,24.5,24.7,24.4,27.4,24.2,25.3,25.1,24.7,24,24.3,24,21.8,22.7,24.3,24.3,25,24.2,24.2,23.1,24.2,24.5,24.7,24.7,27.4,23.1,24,26.9,24.5,24.5,24.9,24.6,24.4,22.8,23.5,24.1,23.8,21.7,22.4,22.4,21.7,11.3,11.2,11.8,18.1];
const avg = [1.8,2.3,2.5,2.4,2.5,2.5,2.4,2.5,2.4,2.1,2.3,2,1.8,1.5,1.7,2.6,2.9,2.4,2,1.9,1.8,1.8,1.6,1.6,1.5,1.6,1.7,1.7,1.6,1.5,1.6,2,7.4,6.9,11.9,11,11.9,12.2,13.6,17.2,13.9,17.7,19.7,21.5,22.8,25,25.2,25.2,25,25,25,25,25,25,25,25,25,25.2,24.9,24.7,24.2,23.8,24.3,24.8,24.9,25.1,25.1,25.1,25,24.9,24.7,24.5,24.5,24.5,24.4,23.6,23.6,24,24,24.9,24.6,24.8,24,23.4,24.4,24.9,19.5,15.6,14.3,13.6,15.1,16.6,18,16.52,18.9,16.8,20,19.6,23.7,25.3,25.2,24.8,24.6,25,24.9,24.9,25.4,25.8,26,25.9,25.8,25.6,25.4,25.3,25.1,24.7,24,23.2,23,23.8,24.1,24.3,23.5,21.9,23.3,24.5,24.3,23.9,22.4,24,23.1,20.2,21.5,23.3,24,24.2,23.8,23.8,21.7,23.3,24.2,24.4,24.5,24,21.8,23.3,23.5,23.6,23.9,24.5,24.4,22.4,20.7,21.2,21.9,22.9,20.3,21.6,20.6,15.3,11.2,11.2,11.2,14.3];
const min = [1.4,1.9,2.1,2,2,2.2,1.8,1.8,1.8,1.7,1.8,1.7,1.5,1.1,.9,2,2.6,2.1,1.5,1.2,-.6,1.4,1.4,1.3,1.2,1.4,1.5,-2.7,1.4,1.3,1.3,.9,3.2,3.2,11.8,6.2,10.2,11.1,5.6,13.9,12.7,13,17.6,19,21.4,24.3,25.1,25.1,24.1,25,25,25,25,25,25,25,25,24.9,24.9,24,23.3,22.2,23.8,24.1,24.5,25,25,24.9,23.8,23.5,23.2,23.6,23.8,24.1,24,21.9,21.6,22.9,22.9,24.3,23.9,24.1,23.2,22.1,22.1,23.4,15.5,13.1,13,11.3,14,14.5,16.2,13.99,16.2,14.2,18.2,17.9,21.2,24.8,24.5,23.7,23.5,23.5,23.8,24.4,25.1,25.7,25.9,25.8,25.7,25.5,25.3,25.2,24.9,24.5,23.3,22.9,22.4,22.9,23.2,24,22.2,19.9,22.3,23.9,23.2,22.8,20.2,23.6,22,18.2,18.4,22.5,23.4,23.3,22.1,23,19.4,21.8,23.6,24.1,24.3,22.8,20.3,22.4,22.4,22.7,22.7,24.3,24,21.1,18.3,19.7,19.9,21.4,18.2,20.6,18.7,12.2,11.2,11.2,11.2,12.2];

// whole-period profile: x, y pairs in thirds of a chart unit
const profile = [58,191,70,190,74,180,79,190,87,179,92,190,97,180,102,188,107,178,111,190,132,190,137,186,142,191,200,191,204,180,209,191,292,191,297,178,301,190,345,188,425,190,429,176,433,190,450,183,455,190,505,188,509,175,514,190,526,187,530,168,535,187,541,170,560,166,590,167,602,171,717,171,724,188,740,190,768,187,775,180,780,190,835,190,838,184,845,188,1025,187,1030,168,1045,160,1055,148,1140,149,1147,163,1165,155,1170,148,1260,150,1295,152,1300,172,1308,160,1335,160,1342,149,1355,149,1368,160,1378,172,1410,174,1448,178,1470,174,1570,172,1578,160,1584,172,1600,173,1608,178,1625,178,1635,184,1652,184,1658,176,1740,173,1762,168,1765,157,1770,168,1815,169,1825,155,1835,162,1845,153,1880,158,1888,148,1900,162,1925,156,1960,154,1965,148,1973,164,2010,162,2016,150,2022,160,2028,150,2034,160,2040,150,2046,160,2052,152,2058,166,2088,168,2102,183,2175,184,2180,178,2186,184,2195,184,2199,172,2205,185,2265,187,2278,199,2322,199,2328,186,2334,194,2344,186,2356,186,2362,199,2450,199,2455,193,2462,199,2485,199,2491,187,2497,199,2506,187,2510,199,2540,199,2546,192,2550,199,2600,199,2609,186,2615,199,2678,199,2683,193,2690,199,2703,187,2708,199,2720,199,2725,184,2730,199,2738,188,2742,199,2775,199,2785,192,2798,187,2805,155,2814,188,2822,165,2834,163];

const NS = 'http://www.w3.org/2000/svg';
const HOVER = 93;
const px = i => (247.3 + i * 5.68).toFixed(1);
const py = v => (587.7 - v * 10.52).toFixed(1);

function add(parent, tag, attrs, text) {
  const node = document.createElementNS(NS, tag);
  for (const key in attrs) node.setAttribute(key, attrs[key]);
  if (text) node.textContent = text;
  parent.appendChild(node);
  return node;
}

const series = document.getElementById('series');
for (const [values, color] of [[max, '#5b7bdc'], [min, '#97df7c'], [avg, '#ffd35c']]) {
  const g = add(series, 'g', {});
  add(g, 'polyline', { class: 'line', stroke: color, points: '245.5,' + py(values[0]) + ' ' + values.map((v, i) => px(i) + ',' + py(v)).join(' ') });
  values.slice(0, 163).forEach((v, i) => {
    add(g, 'circle', { cx: px(i), cy: py(v), r: i === HOVER ? 3.5 : 2.8, fill: i === HOVER ? '#fff' : color, stroke: color, 'stroke-width': i === HOVER ? 2 : 1 });
    if (i !== HOVER && color !== '#ffd35c') add(g, 'circle', { cx: px(i), cy: py(v), r: 1, fill: '#fff', 'fill-opacity': .45 });
  });
}

const ticks = document.getElementById('ticks');
['20:00', '22:00', '7', '02:00', '04:00', '06:00', '08:00'].forEach((label, i) => {
  const x = 305 + Math.round(i * 136.4);
  add(ticks, 'path', { class: 'tick', d: `M${x} 723v5` });
  add(ticks, 'text', { class: label === '7' ? 'xlab day' : 'xlab', x: x + 1, y: 736, transform: `rotate(-30 ${x + 1} 736)` }, label);
});

const points = [];
for (let i = 0; i < profile.length; i += 2) {
  points.push((230 + profile[i] / 3).toFixed(1) + ',' + (720 + profile[i + 1] / 3).toFixed(1));
}
const overview = document.getElementById('overview');
add(overview, 'polygon', { class: 'area', points: '249,792 ' + points.join(' ') + ' 1175,792' });
add(overview, 'polyline', { class: 'area-edge', points: points.join(' ') });
```
